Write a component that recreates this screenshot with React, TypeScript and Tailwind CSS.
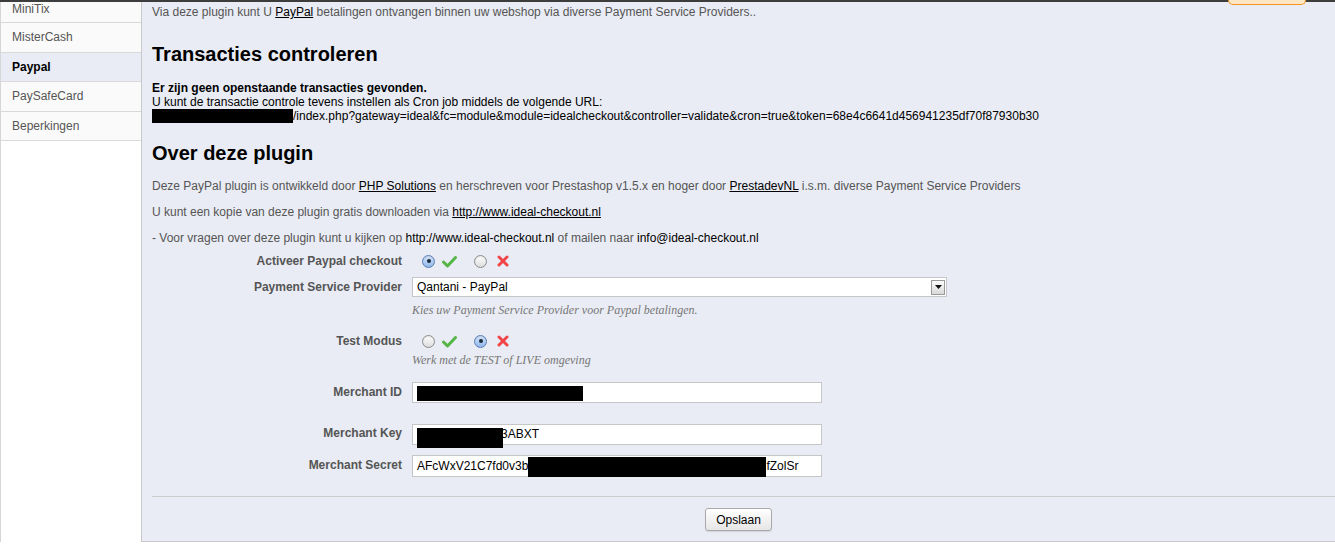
import React from 'react';

const menuItems = [
  { label: 'MiniTix', first: true },
  { label: 'MisterCash' },
  { label: 'Paypal', active: true },
  { label: 'PaySafeCard' },
  { label: 'Beperkingen' },
];

const Radio: React.FC<{ checked?: boolean }> = ({ checked }) => (
  <span
    className={
      'inline-flex items-center justify-center w-[13px] h-[13px] rounded-full border shadow-[inset_0_1px_1px_rgba(0,0,0,0.1)] ' +
      (checked
        ? 'border-[#5b7db5] bg-gradient-to-b from-[#d6e6fb] to-[#8fb6ea]'
        : 'border-[#8c8c8c] bg-gradient-to-b from-[#ffffff] to-[#dcdcdc]')
    }
  >
    {checked && <span className="w-[4px] h-[4px] rounded-full bg-[#1d2a3a]" />}
  </span>
);

const CheckMark = () => (
  <svg width="15" height="13" viewBox="0 0 15 13">
    <path d="M1.5 7 L5.5 11 L13.5 2.5" fill="none" stroke="#55b545" strokeWidth="3" strokeLinecap="round" strokeLinejoin="round" />
  </svg>
);

const Cross = () => (
  <svg width="12" height="12" viewBox="0 0 12 12">
    <path d="M2 2 L10 10 M10 2 L2 10" fill="none" stroke="#f0464a" strokeWidth="3" strokeLinecap="round" />
  </svg>
);

const Toggle: React.FC<{ on: boolean }> = ({ on }) => (
  <div className="flex items-center h-[16px]">
    <div className="ml-[10px] flex"><Radio checked={on} /></div>
    <div className="ml-[7px] flex"><CheckMark /></div>
    <div className="ml-[17px] flex"><Radio checked={!on} /></div>
    <div className="ml-[10px] flex"><Cross /></div>
  </div>
);

const Label: React.FC<{ children: React.ReactNode }> = ({ children }) => (
  <div className="w-[270px] pr-[10px] text-right font-bold text-[#555] text-[12px] leading-[16px]">{children}</div>
);

const Redact: React.FC<{ className?: string }> = ({ className }) => (
  <span className={'inline-block bg-black align-middle ' + (className ?? '')} />
);

const helpFont = { fontFamily: '"Liberation Serif", Georgia, serif' };

export default function App() {
  return (
    <div className="w-[1335px] h-[550px] overflow-hidden bg-white text-[12px] relative" style={{ fontFamily: '"Liberation Sans", Arial, Helvetica, sans-serif' }}>
      <div className="h-[2px] bg-[#3d3d3d]" />
      <div className="absolute top-0 left-[1228px] w-[78px] h-[5px] rounded-b-[6px] border border-t-0 border-[#f7931e] bg-[#fde6c4]" />
      <div className="flex">
        <aside className="w-[141px] shrink-0 border-l border-[#d6d6d6]">
          {menuItems.map((item) => (
            <div
              key={item.label}
              className={
                'flex items-center pl-[11px] border-b border-[#d9d9d9] ' +
                (item.first ? 'h-[21px] pb-[7px] ' : 'h-[29.5px] ') +
                (item.active ? 'bg-[#e9ecf4] font-bold text-black' : 'bg-[#fafafa] text-[#555]')
              }
            >
              {item.label}
            </div>
          ))}
        </aside>
        <main className="flex-1 h-[540px] bg-[#e9ecf4] border-l border-b border-[#c9c9c9]">
          <div className="pl-[10px] pt-[2px]">
            <p className="text-[#555] leading-[16px]">
              Via deze plugin kunt U <span className="underline text-black">PayPal</span> betalingen ontvangen binnen uw webshop via diverse Payment Service Providers..
            </p>
            <h2 className="mt-[22px] text-[20px] font-bold text-black leading-[24px]">Transacties controleren</h2>
            <div className="mt-[15px] leading-[14px] text-black">
              <p className="font-bold">Er zijn geen openstaande transacties gevonden.</p>
              <p>U kunt de transactie controle tevens instellen als Cron job middels de volgende URL:</p>
              <p className="flex items-center">
                <Redact className="w-[141px] h-[14px]" />
                <span>/index.php?gateway=ideal&amp;fc=module&amp;module=idealcheckout&amp;controller=validate&amp;cron=true&amp;token=68e4c6641d456941235df70f87930b30</span>
              </p>
            </div>
            <h2 className="mt-[18px] text-[20px] font-bold text-black leading-[24px]">Over deze plugin</h2>
            <div className="text-[#555] leading-[16px]">
              <p className="mt-[13px]">
                Deze PayPal plugin is ontwikkeld door <span className="underline text-black">PHP Solutions</span> en herschreven voor Prestashop v1.5.x en hoger door <span className="underline text-black">PrestadevNL</span> i.s.m. diverse Payment Service Providers
              </p>
              <p className="mt-[10px]">
                U kunt een kopie van deze plugin gratis downloaden via <span className="underline text-black">http://www.ideal-checkout.nl</span>
              </p>
              <p className="mt-[10px]">
                - Voor vragen over deze plugin kunt u kijken op <span className="text-black">http://www.ideal-checkout.nl</span> of mailen naar <span className="text-black">info@ideal-checkout.nl</span>
              </p>
            </div>
          </div>

          <div className="mt-[7px]">
            <div className="flex items-center h-[16px]">
              <Label>Activeer Paypal checkout</Label>
              <Toggle on />
            </div>
            <div className="flex items-start mt-[8px]">
              <div className="pt-[2px]"><Label>Payment Service Provider</Label></div>
              <div>
                <div className="flex items-center w-[535px] h-[20px] bg-white border border-[#c6c6c6]">
                  <span className="flex-1 pl-[4px] text-black text-[12px]">Qantani - PayPal</span>
                  <span className="w-[14px] h-[15px] mr-[1px] flex items-center justify-center border border-[#9a9a9a] bg-gradient-to-b from-[#fdfdfd] to-[#d8d8d8]">
                    <svg width="7" height="4" viewBox="0 0 7 4"><path d="M0 0 H7 L3.5 4 Z" fill="#111" /></svg>
                  </span>
                </div>
                <p className="mt-[5px] text-[12px] leading-[16px] italic text-[#777]" style={helpFont}>
                  Kies uw Payment Service Provider voor Paypal betalingen.
                </p>
              </div>
            </div>
            <div className="flex items-start mt-[15px]">
              <Label>Test Modus</Label>
              <div>
                <Toggle on={false} />
                <p className="mt-[3px] text-[12px] leading-[16px] italic text-[#777]" style={helpFont}>
                  Werk met de TEST of LIVE omgeving
                </p>
              </div>
            </div>
            <div className="flex items-start mt-[14px]">
              <div className="pt-[2px]"><Label>Merchant ID</Label></div>
              <div className="w-[410px] h-[21px] bg-white border border-[#c6c6c6] flex items-start pl-[4px]">
                <Redact className="w-[166px] h-[15px] mt-[3px]" />
              </div>
            </div>
            <div className="flex items-start mt-[21px]">
              <div className="pt-[1px]"><Label>Merchant Key</Label></div>
              <div className="w-[410px] h-[21px] bg-white border border-[#c6c6c6] flex items-start pl-[4px]">
                <Redact className="w-[86px] h-[20px] mt-[3px]" />
                <span className="text-black leading-[19px] -ml-[2px]">3ABXT</span>
              </div>
            </div>
            <div className="flex items-start mt-[10px]">
              <div className="pt-[2px]"><Label>Merchant Secret</Label></div>
              <div className="w-[410px] h-[22px] bg-white border border-[#c6c6c6] flex items-start pl-[4px]">
                <span className="text-black leading-[20px]">AFcWxV21C7fd0v3b</span>
                <Redact className="w-[238px] h-[20px] mt-[1px]" />
                <span className="text-black leading-[20px]">fZolSr</span>
              </div>
            </div>
          </div>

          <div className="mt-[19px] ml-[10px] border-t border-[#cccccc]" />
          <div className="flex justify-center mt-[11px]">
            <button className="w-[67px] h-[23px] rounded-[3px] border border-[#a9a9a9] bg-gradient-to-b from-[#ffffff] to-[#e6e6e6] text-black text-[12px] shadow-[0_1px_1px_rgba(0,0,0,0.1)]">
              Opslaan
            </button>
          </div>
        </main>
      </div>
    </div>
  );
}
